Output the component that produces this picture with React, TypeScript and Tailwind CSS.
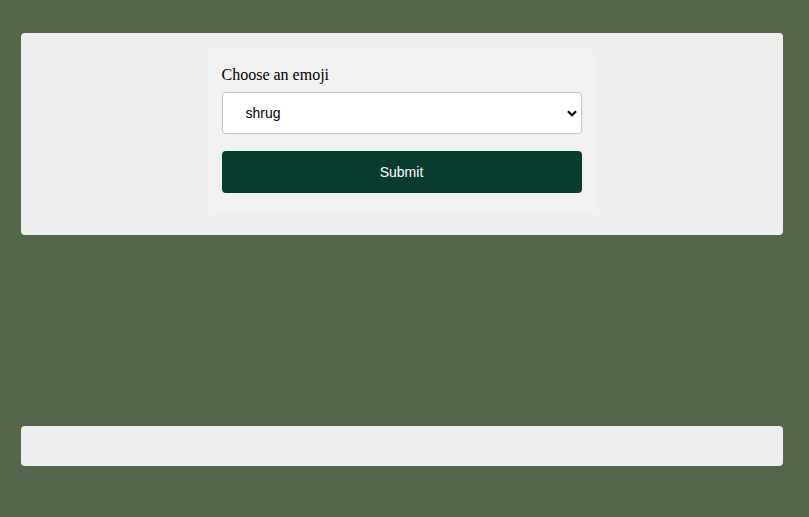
export default function App() {
  return (
    <div className="min-h-[517px] bg-[#55674b] pt-[33px]">
      <section className="ml-[21px] w-[762px] rounded-[4px] bg-[#efefef] pt-[21px] pb-[23px]">
        <form className="mx-auto w-[385px] rounded-[4px] bg-[#f1f1f1] px-3 pt-[12px] pb-[19px]">
          <label
            htmlFor="emoji"
            className="block text-[16px] leading-[18px] text-black"
            style={{ fontFamily: '"Liberation Serif", serif' }}
          >
            Choose an emoji
          </label>
          <div className="relative mt-[8px]">
            <select
              id="emoji"
              defaultValue="shrug"
              className="block h-[42px] w-[360px] appearance-none rounded-[4px] border border-[#c4c4c4] bg-white pl-[23px] text-[14px] text-black outline-none"
              style={{ fontFamily: '"Liberation Sans", Arial, sans-serif' }}
            >
              <option value="shrug">shrug</option>
              <option value="smile">smile</option>
              <option value="wave">wave</option>
            </select>
            <svg
              className="pointer-events-none absolute right-[6px] top-[18px]"
              width="10"
              height="7"
              viewBox="0 0 10 7"
            >
              <path d="M1 1.2 L5 5.2 L9 1.2" fill="none" stroke="#000" strokeWidth="2.2" />
            </svg>
          </div>
          <button
            type="button"
            className="mt-[17px] block h-[42px] w-[360px] rounded-[4px] bg-[#083c2e] text-[14px] text-white"
            style={{ fontFamily: '"Liberation Sans", Arial, sans-serif' }}
          >
            Submit
          </button>
        </form>
      </section>
      <section className="mt-[191px] ml-[21px] h-[40px] w-[762px] rounded-[4px] bg-[#efefef]" />
    </div>
  );
}
